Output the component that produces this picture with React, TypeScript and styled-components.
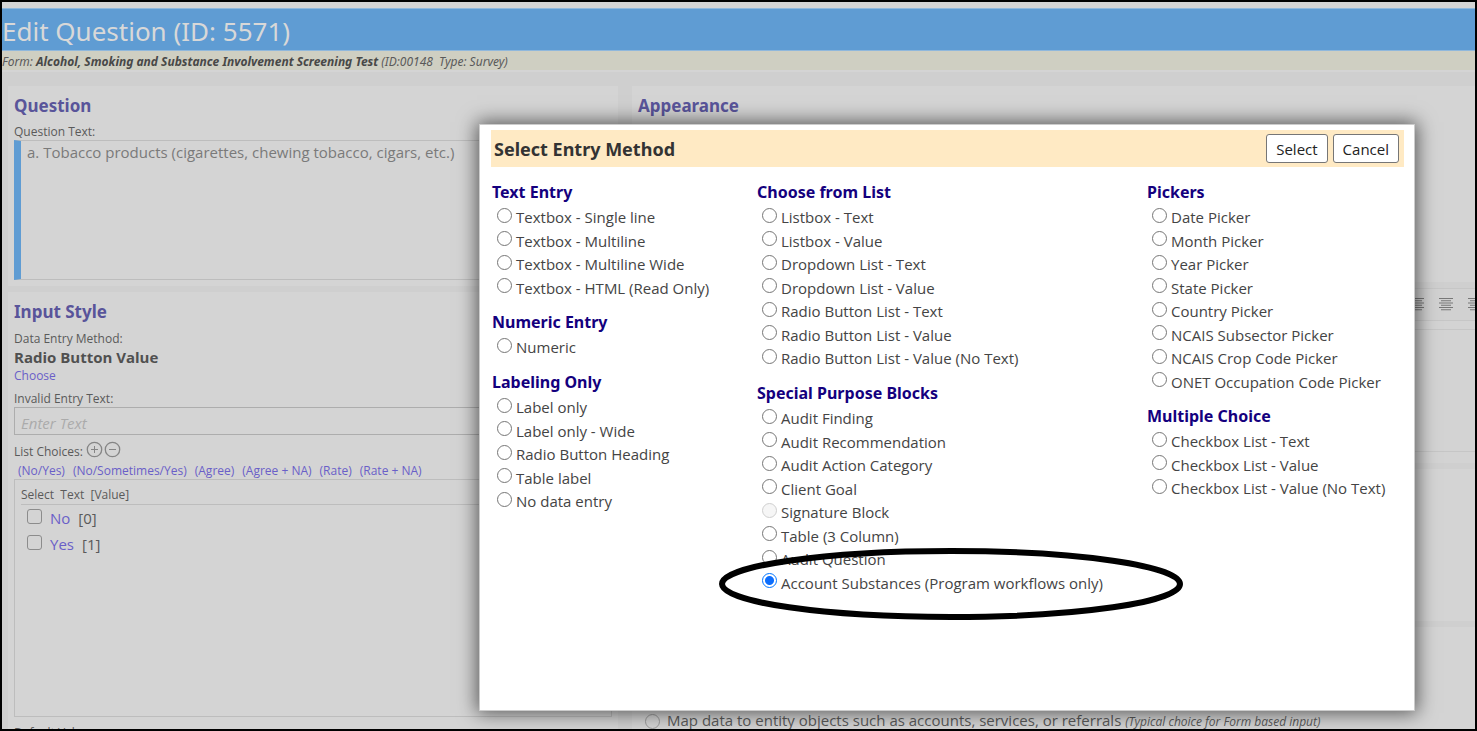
import React from "react";
import styled, { createGlobalStyle, css } from "styled-components";

const Global = createGlobalStyle`
  *, *::before, *::after { box-sizing: border-box; }
  html, body { margin: 0; height: 100%; overflow: hidden; }
  #root { height: 100%; }
  body, button, input, textarea { font-family: "Open Sans", "Noto Sans", sans-serif; }
  h1, h2, h3, p { margin: 0; }
  h1, h2, legend { font-family: "Noto Sans", "Open Sans", sans-serif; }
`;

const Page = styled.div`
  position: relative;
  height: 100vh;
  border: 2px solid #000;
  background: #cfcfcf;
  color: #5a5a5a;
  display: flex;
  flex-direction: column;
  overflow: hidden;
`;
const TopStrip = styled.div`
  flex: none;
  height: 6px;
  background: #d4d4d4;
`;
const TitleBar = styled.header`
  flex: none;
  height: 43px;
  background: #5f9cd3;
  border-top: 1px solid #90b8dc;
  border-bottom: 1px solid #90b8dc;
  color: #d8d8d8;
`;
const Title = styled.h1`
  font-size: 26px;
  line-height: 44px;
  font-weight: 400;
`;
const FormLine = styled.p`
  flex: none;
  height: 21px;
  background: #cfcfc2;
  border-bottom: 2px solid #d4d4d4;
  font-family: "Noto Sans", "Open Sans", sans-serif;
  font-size: 12px;
  line-height: 21px;
  font-style: italic;
  white-space: pre;
  b { color: #484848; }
`;
const Columns = styled.div`
  flex: 1;
  min-height: 0;
  display: grid;
  grid-template-columns: 610fr 843fr;
  gap: 14px;
  padding: 14px 0 0 6px;
`;
const Column = styled.div`
  display: flex;
  flex-direction: column;
  gap: 6px;
  min-width: 0;
`;
const Panel = styled.section<{ $height?: number }>`
  flex: none;
  background: #d4d4d4;
  padding: 8px 6px 6px;
  ${(p) => p.$height && css`height: ${p.$height}px;`}
`;
const PanelTitle = styled.h2`
  margin-bottom: 6px;
  font-size: 17px;
  line-height: 24px;
  font-weight: 700;
  color: #59549a;
`;
const FieldLabel = styled.label<{ $space?: number }>`
  display: block;
  padding-top: ${(p) => p.$space ?? 0}px;
  font-size: 12px;
  line-height: 16px;
`;
const QuestionText = styled.textarea`
  display: block;
  width: 100%;
  height: 140px;
  resize: none;
  border: 1px solid #bdbdbd;
  border-left: 7px solid #5f9cd3;
  background: transparent;
  color: #7a7a7a;
  font-size: 15px;
  line-height: 20px;
  padding: 1px 6px;
`;
const MethodName = styled.p`
  font-size: 15px;
  line-height: 20px;
  font-weight: 700;
  color: #505050;
`;
const TextLink = styled.a`
  color: #6a5fc8;
  text-decoration: none;
`;
const SmallRow = styled.div<{ $gap?: number; $indent?: number; $space?: number }>`
  display: flex;
  align-items: center;
  gap: ${(p) => p.$gap ?? 0}px;
  padding: ${(p) => p.$space ?? 0}px 0 0 ${(p) => p.$indent ?? 0}px;
  font-size: 12px;
  line-height: 17px;
`;
const InvalidText = styled.input`
  display: block;
  width: 100%;
  height: 28px;
  border: 1px solid #adadad;
  background: transparent;
  font-size: 15px;
  padding: 3px 6px 0;
  &::placeholder { color: #ababab; font-style: italic; opacity: 1; }
`;
const ChoiceTools = styled.span`
  display: flex;
  padding: 0 0 4px 3px;
`;
const IconButton = styled.button`
  display: flex;
  width: 18px;
  padding: 0;
  border: 0;
  background: none;
  color: #858585;
`;
const ChoiceBox = styled.div`
  height: 238px;
  border: 1px solid #bdbdbd;
  padding: 6px 0 0 6px;
`;
const ChoiceHead = styled.div`
  border-bottom: 1px solid #bdbdbd;
  font-size: 12px;
  line-height: 18px;
  white-space: pre;
`;
const ChoiceRow = styled.div`
  display: flex;
  align-items: center;
  height: 26px;
  padding-left: 6px;
  gap: 8px;
  font-size: 15px;
  line-height: 26px;
`;
const CheckBox = styled.input`
  appearance: none;
  width: 15px;
  height: 15px;
  margin: 0 0 4px;
  border: 1px solid #8c8c8c;
  border-radius: 3px;
`;
const ToolbarPanel = styled.section`
  flex: none;
  height: 175px;
  background: #d3d3d3;
  display: flex;
  flex-direction: column;
  gap: 8px;
`;
const Toolbar = styled.div`
  display: flex;
  justify-content: flex-end;
  align-items: center;
  gap: 15px;
  height: 33px;
  margin-right: -7px;
  border: solid #c6c6c6;
  border-width: 1px 0;
  background: #d1d1d1;
`;
const EditorArea = styled.div`
  height: 123px;
  border: solid #c6c6c6;
  border-width: 1px 0;
`;
const MapRow = styled.label`
  display: flex;
  align-items: center;
  gap: 7px;
  padding: 75px 0 0 7px;
  font-size: 15px;
  line-height: 20px;
  white-space: nowrap;
  small { font-size: 12px; font-style: italic; }
`;
const Radio = styled.input`
  appearance: none;
  flex: none;
  width: 15px;
  height: 15px;
  margin: 0;
  border: 1px solid #767676;
  border-radius: 50%;
  &:checked {
    border-color: #0075ff;
    background: radial-gradient(circle, #0d6efd 4px, transparent 5px);
  }
  &:disabled { border-color: #cfcfcf; background: #f6f6f6; }
`;
const FadedRadio = styled(Radio)`
  border-color: #9a9a9a;
`;
const Dialog = styled.div`
  position: absolute;
  top: 122px;
  left: 477px;
  right: 60px;
  height: 587px;
  background: #fff;
  border: 1px solid #ccc;
  box-shadow: 0 0 18px 2px rgba(0, 0, 0, 0.6);
  padding: 5px 10px 0 11px;
  color: #444;
`;
const DialogBar = styled.div`
  display: flex;
  align-items: center;
  gap: 5px;
  height: 37px;
  padding: 0 5px 0 3px;
  background: #ffeac4;
`;
const DialogTitle = styled.h2`
  flex: 1;
  font-size: 18px;
  line-height: 24px;
  font-weight: 700;
  color: #333;
`;
const DialogButton = styled.button`
  height: 29px;
  padding: 0 9px;
  border: 1px solid #767676;
  border-radius: 3px;
  background: #fff;
  color: #222;
  font-size: 15px;
`;
const Groups = styled.div`
  display: grid;
  grid-template-columns: 265fr 390fr 257fr;
  padding: 13px 0 0 1px;
`;
const Group = styled.fieldset`
  margin: 0 0 11px;
  padding: 0;
  border: 0;
  min-width: 0;
`;
const GroupTitle = styled.legend`
  padding: 0;
  font-size: 16px;
  line-height: 25px;
  font-weight: 700;
  color: #14007e;
`;
const Option = styled.label<{ $tall?: boolean }>`
  display: flex;
  align-items: center;
  gap: 4px;
  height: ${(p) => (p.$tall ? 24 : 23)}px;
  padding-left: 5px;
  font-size: 15px;
  line-height: 24px;
  white-space: nowrap;
  ${Radio} { margin-bottom: 4px; }
`;
const Highlight = styled.svg`
  position: absolute;
  left: 239px;
  top: 422px;
  width: 464px;
  height: 74px;
  pointer-events: none;
`;

const CircleIcon = ({ plus }: { plus?: boolean }) => (
  <svg width="17" height="17" viewBox="0 0 17 17" fill="none" stroke="currentColor" aria-hidden="true">
    <circle cx="8.5" cy="8.5" r="7.2" strokeWidth="1.3" />
    <path d={plus ? "M5 8.5h7M8.5 5v7" : "M5 8.5h7"} />
  </svg>
);

const AlignIcon = () => (
  <svg width="14" height="13" viewBox="0 0 14 13" stroke="#777" aria-hidden="true">
    {[0.5, 5, 9.5].map((y) => (
      <path key={y} d={`M0 ${y}h14M2 ${y + 2.25}h10`} />
    ))}
  </svg>
);

type GroupData = { title: string; options: string[] };
const columns: GroupData[][] = [
  [
    { title: "Text Entry", options: ["Textbox - Single line", "Textbox - Multiline", "Textbox - Multiline Wide", "Textbox - HTML (Read Only)"] },
    { title: "Numeric Entry", options: ["Numeric"] },
    { title: "Labeling Only", options: ["Label only", "Label only - Wide", "Radio Button Heading", "Table label", "No data entry"] },
  ],
  [
    {
      title: "Choose from List",
      options: ["Listbox - Text", "Listbox - Value", "Dropdown List - Text", "Dropdown List - Value", "Radio Button List - Text", "Radio Button List - Value", "Radio Button List - Value (No Text)"],
    },
    {
      title: "Special Purpose Blocks",
      options: ["Audit Finding", "Audit Recommendation", "Audit Action Category", "Client Goal", "Signature Block", "Table (3 Column)", "Audit Question", "Account Substances (Program workflows only)"],
    },
  ],
  [
    {
      title: "Pickers",
      options: ["Date Picker", "Month Picker", "Year Picker", "State Picker", "Country Picker", "NCAIS Subsector Picker", "NCAIS Crop Code Picker", "ONET Occupation Code Picker"],
    },
    { title: "Multiple Choice", options: ["Checkbox List - Text", "Checkbox List - Value", "Checkbox List - Value (No Text)"] },
  ],
];

const presets = ["(No/Yes)", "(No/Sometimes/Yes)", "(Agree)", "(Agree + NA)", "(Rate)", "(Rate + NA)"];

const Choice = ({ text, value }: { text: string; value: number }) => (
  <ChoiceRow>
    <CheckBox type="checkbox" aria-label={`Select ${text}`} />
    <TextLink href="#">{text}</TextLink>
    <span>[{value}]</span>
  </ChoiceRow>
);

export default function App() {
  return (
    <>
      <Global />
      <Page>
        <TopStrip />
        <TitleBar>
          <Title>Edit Question (ID: 5571)</Title>
        </TitleBar>
        <FormLine>
          Form: <b>Alcohol, Smoking and Substance Involvement Screening Test</b>{" (ID:00148  Type: Survey)"}
        </FormLine>
        <Columns>
          <Column>
            <Panel>
              <PanelTitle>Question</PanelTitle>
              <FieldLabel htmlFor="question">Question Text:</FieldLabel>
              <QuestionText id="question" defaultValue="a. Tobacco products (cigarettes, chewing tobacco, cigars, etc.)" />
            </Panel>
            <Panel>
              <PanelTitle>Input Style</PanelTitle>
              <SmallRow>Data Entry Method:</SmallRow>
              <MethodName>Radio Button Value</MethodName>
              <SmallRow>
                <TextLink href="#">Choose</TextLink>
              </SmallRow>
              <FieldLabel htmlFor="invalid" $space={7}>Invalid Entry Text:</FieldLabel>
              <InvalidText id="invalid" placeholder="Enter Text" />
              <SmallRow $space={6}>
                List Choices:
                <ChoiceTools>
                  <IconButton aria-label="Add choice"><CircleIcon plus /></IconButton>
                  <IconButton aria-label="Remove choice"><CircleIcon /></IconButton>
                </ChoiceTools>
              </SmallRow>
              <SmallRow $gap={8} $indent={4}>
                {presets.map((p) => (
                  <TextLink key={p} href="#">{p}</TextLink>
                ))}
              </SmallRow>
              <ChoiceBox>
                <ChoiceHead>{"Select  Text  [Value]"}</ChoiceHead>
                <Choice text="No" value={0} />
                <Choice text="Yes" value={1} />
              </ChoiceBox>
              <FieldLabel $space={8}>Default Value:</FieldLabel>
            </Panel>
          </Column>
          <Column>
            <Panel $height={196}>
              <PanelTitle>Appearance</PanelTitle>
            </Panel>
            <ToolbarPanel>
              <Toolbar>
                <AlignIcon />
                <AlignIcon />
                <AlignIcon />
              </Toolbar>
              <EditorArea />
            </ToolbarPanel>
            <Panel $height={152} />
            <Panel $height={140}>
              <MapRow>
                <FadedRadio type="radio" name="mapping" />
                <span>
                  Map data to entity objects such as accounts, services, or referrals <small>(Typical choice for Form based input)</small>
                </span>
              </MapRow>
            </Panel>
          </Column>
        </Columns>
        <Dialog role="dialog" aria-labelledby="dialog-title">
          <DialogBar>
            <DialogTitle id="dialog-title">Select Entry Method</DialogTitle>
            <DialogButton>Select</DialogButton>
            <DialogButton>Cancel</DialogButton>
          </DialogBar>
          <Groups>
            {columns.map((groups, c) => (
              <div key={c}>
                {groups.map((g) => (
                  <Group key={g.title}>
                    <GroupTitle>{g.title}</GroupTitle>
                    {g.options.map((o, i) => (
                      <Option key={o} $tall={i % 2 === 0}>
                        <Radio
                          type="radio"
                          name="method"
                          defaultChecked={o.startsWith("Account Substances")}
                          disabled={o === "Signature Block"}
                        />
                        {o}
                      </Option>
                    ))}
                  </Group>
                ))}
              </div>
            ))}
          </Groups>
          <Highlight viewBox="0 0 464 74" aria-hidden="true">
            <ellipse cx="232" cy="37" rx="229" ry="33" fill="none" stroke="#000" strokeWidth="6" />
          </Highlight>
        </Dialog>
      </Page>
    </>
  );
}
